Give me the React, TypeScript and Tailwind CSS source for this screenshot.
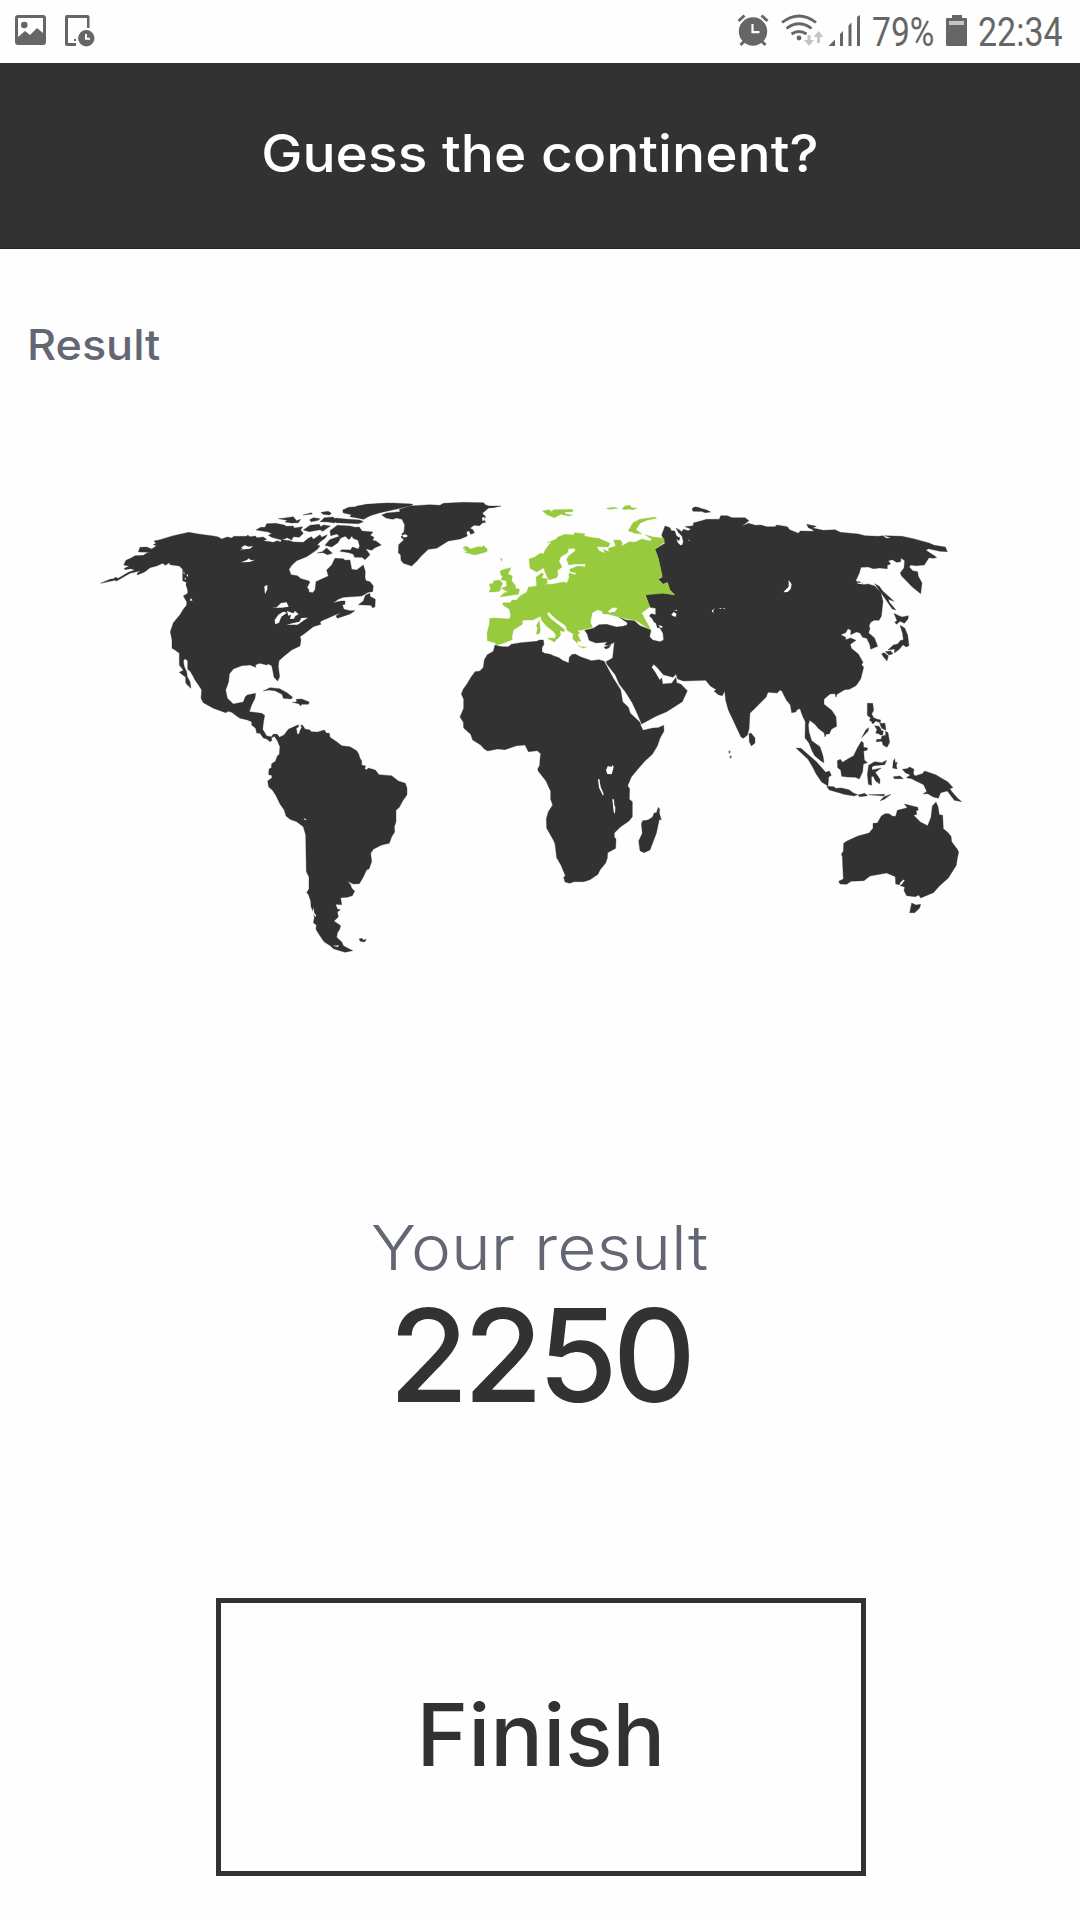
const DARK = "#323232";
const GREEN = "#97ca3d";

type Region = { origin: string; fill: string; shapes: string[]; lakes?: string[] };

const regions: Region[] = [
  {
    // North America
    origin: "translate(90 490) scale(.33333)",
    fill: DARK,
    shapes: [
      "M32 280L60 268L72 266L75 262L85 265L115 247L135 240L122 236L105 239L103 235L118 229L101 225L108 211L125 203L135 197L160 196L172 188L183 187L145 186L150 172L170 171L185 177L200 167L190 164L198 160L192 153L210 149L250 137L296 127L325 132L370 138L385 141L395 147L412 141L425 144L432 139L470 139L473 135L480 140L497 138L500 143L520 141L530 148L520 152L550 157L562 152L572 156L575 149L600 152L610 156L640 157L655 145L665 140L670 148L690 134L695 142L712 134L706 144L690 156L682 165L690 168L682 178L670 187L650 200L620 212L606 225L597 238L603 254L622 257L633 266L655 272L660 276L651 293L656 297L657 306L668 308L675 300L678 275L700 265L715 258L710 240L725 225L735 205L760 206L765 211L780 210L785 238L800 240L820 225L826 245L825 262L828 272L840 275L850 288L848 305L835 307L815 318L760 322L745 328L730 338L753 333L765 333L765 343L757 345L762 358L780 362L795 362L780 372L765 377L742 385L738 378L752 368L735 375L710 386L700 390L690 396L693 403L670 410L645 430L630 440L633 450L630 468L605 480L580 500L567 512L565 530L569 560L563 573L552 562L549 545L545 527L535 522L530 525L510 520L497 524L497 532L480 525L455 527L430 537L418 552L416 575L407 600L412 625L430 642L460 636L466 620L472 615L497 610L495 625L485 645L478 665L515 670L524 676L520 700L518 718L530 738L545 740L548 734L556 733L568 742L575 760L568 768L562 747L553 739L544 744L546 751L540 755L530 747L520 744L510 730L500 729L497 715L485 705L485 695L470 689L450 685L440 678L425 667L415 664L407 668L370 655L340 638L333 625L335 600L326 586L315 570L309 558L300 543L293 538L293 512L285 506L280 513L283 530L290 545L292 560L300 575L303 595L290 583L287 577L287 562L268 547L280 541L268 525L268 490L255 480L246 475L246 450L241 425L250 398L255 392L270 374L280 358L290 345L290 335L280 318L293 310L293 300L288 285L289 277L278 272L278 238L268 228L240 224L238 218L226 226L218 220L200 228L180 233L165 245L142 255L142 249L152 242L120 250L80 273L75 271Z",
      "M498 120L512 112L525 112L530 101L556 100L580 104L590 109L610 108L612 114L638 110L632 120L640 130L628 142L610 140L605 150L592 143L575 150L545 142L535 136L545 131L535 126Z",
      "M565 86L585 84L610 80L615 86L620 92L632 88L625 98L605 99L585 96L592 91ZM639 75L664 68L667 72ZM659 89L670 83L690 86L685 91L663 95ZM693 67L715 64L724 70L719 75L699 73ZM640 120L660 106L688 103L692 110L700 105L721 108L698 124L690 119L658 125ZM703 83L730 81L740 92L734 99L714 96L690 95ZM736 84L765 87L810 90L820 95L805 101L738 98ZM758 60L776 52L800 50L828 43L899 39L900 56L876 66L857 67L820 88L785 74L760 69Z",
      "M720 122L742 106L780 108L795 112L808 111L816 123L849 126L841 136L852 142L848 151L858 153L874 165L855 173L845 181L827 176L840 194L825 209L816 202L794 202L790 193L777 188L750 184L755 179L782 180L787 171L805 177L809 168L804 151L789 145L786 138L777 149L766 139L752 144L744 158L725 171L705 166L719 149L748 139L741 132L722 137ZM682 189L697 185L710 174L727 190L712 194L700 188ZM826 316L840 310L840 319L856 328L855 350L848 354L843 346L805 344L820 333Z",
      "M520 603L540 593L569 596L592 609L608 622L603 627L580 625L576 613L555 602L536 600ZM607 637L620 636L619 628L635 627L658 636L655 643L635 643L632 648L626 641Z",
    ],
    lakes: [
      "M448 179L459 176L453 173L464 166L476 170L489 168L480 176ZM453 217L471 210L476 205L483 211L495 209L480 216ZM523 289L532 285L532 298L525 313ZM546 353L560 352L573 339L590 337L596 350L575 353ZM556 403L554 390L565 374L580 365L591 368L574 380L567 398ZM591 363L610 370L615 363L626 373L616 378L612 386L600 387L603 374L595 377ZM590 404L610 399L628 395L634 384L654 383L642 391L623 404ZM300 333L302 324L308 331ZM280 244l4 5l-2 5ZM290 252l5 3l-4 7ZM284 263l4 2l-3 6Z",
    ],
  },
  {
    // Greenland
    origin: "translate(320 490) scale(.33333)",
    fill: DARK,
    shapes: [
      "M110 48L150 43L220 39L275 42L279 45L240 55L180 68L150 77L130 87L90 80Z",
      "M185 75L200 69L240 65L238 58L270 48L330 44L360 46L370 40L430 37L491 38L496 44L507 48L543 48L520 53L506 54L487 70L497 80L492 89L497 97L487 99L479 107L462 106L450 115L459 119L463 129L452 133L447 122L439 126L442 138L421 147L385 153L350 175L325 178L303 199L291 213L275 228L250 220L243 211L242 195L235 188L236 164L252 149L245 144L243 139L249 138L245 132L252 126L254 104L246 88L230 84L218 88L198 84Z",
    ],
    lakes: ["M248 135L256 133L264 138L258 142L249 142ZM486 84L493 80L494 89L488 94Z"],
  },
  {
    // South America
    origin: "translate(250 720) scale(.33333)",
    fill: DARK,
    shapes: [
      "M70 43L82 43L88 52L102 45L115 28L145 14L146 20L139 25L142 43L147 42L150 32L155 22L152 15L158 16L165 27L180 30L183 35L203 36L223 30L229 39L238 40L240 52L260 65L275 77L300 80L320 92L326 102L330 115L335 122L335 135L347 138L344 146L350 149L355 144L376 150L387 164L425 167L445 183L466 190L471 204L471 224L458 243L448 262L438 271L438 305L433 320L434 336L425 350L418 370L395 375L370 388L362 400L365 425L357 447L350 449L338 475L328 491L310 492L293 484L302 495L305 505L314 513L307 527L292 532L272 533L275 554L257 553L262 567L271 569L262 576L265 591L252 603L272 617L269 628L262 639L260 652L276 667L280 677L308 692L285 697L250 686L242 678L222 665L205 640L198 628L199 615L190 608L193 594L190 576L183 560L182 543L175 523L170 518L177 506L177 471L169 455L167 345L160 320L140 305L120 298L108 288L103 271L90 252L78 227L67 210L56 201L53 183L66 173L65 166L56 164L57 147L64 143L65 131L76 124L82 108L88 103L90 75Z",
      "M327 657L336 655L340 660L349 658L344 666L331 664Z",
    ],
    lakes: ["M161 294L170 299L165 301ZM190 561L193 580L198 585L196 592L188 579ZM249 675L258 677L266 675L264 681L254 679Z"],
  },
  {
    // Africa
    origin: "translate(440 620) scale(.33333)",
    fill: DARK,
    shapes: [
      "M165 75L175 78L188 80L205 80L214 73L242 68L290 64L298 60L310 60L312 73L306 83L306 95L314 100L331 103L342 108L357 113L367 121L386 129L388 112L395 104L405 102L421 110L438 116L454 122L477 119L493 124L498 134L520 175L542 209L548 245L565 262L571 280L600 307L603 318L609 331L639 324L655 323L671 316L672 333L660 355L652 378L637 403L614 424L597 443L574 471L563 497L569 506L568 538L577 545L577 590L567 603L542 620L523 639L523 651L528 657L527 685L503 698L502 714L497 729L480 750L474 763L450 779L431 785L402 785L389 790L375 786L371 772L376 767L363 736L350 713L345 671L340 660L320 625L319 596L325 575L338 555L332 538L332 514L318 483L308 470L295 454L293 447L299 436L300 418L302 401L292 392L265 395L255 375L230 377L216 382L195 389L173 387L143 393L133 387L122 375L98 360L92 343L71 324L70 307L60 291L71 265L71 238L64 222L70 207L81 192L93 172L105 155L120 153L130 142L133 119L142 104L160 94Z",
      "M655 562L659 568L658 579L664 600L658 598L649 640L630 690L612 698L600 692L596 663L607 640L604 611L608 602L624 600L637 592L643 578L649 579Z",
    ],
    lakes: [
      "M503 439L515 440L517 435L521 440L519 449L515 463L502 462L498 451ZM474 478L478 477L482 500L491 522L489 527L477 503ZM517 538L522 538L523 554L526 562L525 582L521 575Z",
    ],
  },
  {
    // Asia
    origin: "translate(640 490) scale(.33333)",
    fill: DARK,
    shapes: [
      "M17 315L40 309L73 310L103 315L90 300L83 278L70 283L55 268L67 262L55 205L45 178L75 160L65 135L75 108L90 113L94 122L104 123L110 139L120 143L117 152L109 146L113 158L121 166L127 165L130 155L126 139L115 127L108 114L122 122L124 127L130 118L145 122L153 117L135 110L160 107L160 99L200 88L238 88L242 77L262 77L276 83L315 83L327 92L305 109L325 100L347 106L362 105L380 110L405 110L410 105L442 110L449 119L475 130L481 123L520 124L520 120L505 113L500 103L529 109L518 114L550 121L585 119L601 127L655 132L675 137L715 139L729 137L739 145L754 144L734 137L786 139L820 146L867 159L883 166L916 171L922 185L900 184L865 176L858 181L890 202L881 205L867 203L853 225L828 227L812 225L808 231L818 242L833 245L835 259L846 279L842 311L817 291L784 257L781 248L792 234L794 212L783 204L782 215L770 217L757 209L745 212L752 222L742 226L742 236L719 234L700 236L685 231L663 232L658 249L647 273L665 277L669 284L684 282L704 288L722 306L729 334L724 379L717 391L702 391L692 397L687 408L690 414L686 429L703 443L713 469L692 478L689 463L680 445L668 442L660 429L649 426L632 434L633 421L624 416L617 428L602 434L617 442L617 449L632 444L648 451L631 463L634 475L655 492L669 517L665 524L671 532L662 567L648 587L628 598L614 599L599 608L591 613L588 622L585 611L570 612L552 628L552 643L575 661L588 680L590 709L574 718L568 732L559 732L555 741L552 728L536 716L524 702L509 691L505 704L507 726L515 752L540 770L549 798L552 818L542 812L524 797L516 782L507 759L495 744L496 695L488 679L480 656L473 658L467 666L455 668L451 645L439 630L425 602L419 601L412 609L384 607L378 622L330 670L327 718L322 736L310 745L303 741L265 660L257 631L254 603L247 617L235 614L222 603L229 599L211 588L197 571L130 573L113 567L108 553L99 562L70 554L51 532L41 523L35 532L45 546L59 570L65 564L68 582L95 580L108 562L110 578L123 583L142 602L127 635L80 665L48 679L5 702L-10 667L-23 639L-43 607L-62 583L-74 555L-98 524L-102 515L-82 504L-77 457L-95 467L-106 464L-98 456L-132 459L-153 451L-158 433L-166 421L-140 415L-123 404L-100 403L-71 411L-51 409L-39 405L-38 398L-63 381L-42 390L-17 392L0 407L33 420L29 440L38 450L60 455L71 450L69 430L59 413L52 413L48 400L42 396L37 386L28 378L34 371L47 374L47 355L30 352Z",
      "M156 57L166 51L187 56L200 60L212 66L196 68L184 64L159 64ZM704 281L718 289L728 303L762 334L745 328L748 337L768 360L757 357ZM762 370L776 377L787 381L805 377L804 387L793 400L780 394L770 403L764 397L771 392ZM780 406L794 414L803 435L807 467L798 471L789 464L778 478L763 489L764 477L744 480L760 465L773 462L782 451L790 450L788 431ZM736 485L752 483L759 491L747 495ZM725 491L732 488L745 497L741 513L730 500ZM327 731L333 729L345 744L345 759L334 768L328 755Z",
    ],
    lakes: [
      "M430 307L439 297L446 290L446 270L455 283L452 297L443 306ZM94 374L101 366L109 371L108 380L100 379ZM102 362l8 -3l2 3ZM215 362L225 354L220 361L220 370ZM236 357l8 -3v3ZM248 356l7 -1v3ZM650 275L656 279L666 276L667 283L654 281ZM56 405L67 409L67 414L59 412ZM114 109L136 115L129 118ZM145 149l5 1l-3 3Z",
    ],
  },
  {
    // Europe
    origin: "translate(450 490) scale(.33333)",
    fill: GREEN,
    shapes: [
      "M140 465L134 458L112 452L111 430L118 402L119 385L137 384L178 387L182 377L178 358L158 344L159 338L181 338L186 330L200 330L211 317L230 307L235 292L260 288L258 262L275 249L281 253L275 263L288 267L293 279L285 283L306 283L340 276L351 279L357 265L357 249L375 254L379 249L361 245L359 238L383 228L405 230L407 222L376 222L356 225L350 208L355 199L376 182L374 175L355 176L354 187L332 201L327 214L336 231L322 242L324 257L318 264L296 270L284 244L282 233L260 246L240 235L237 207L253 202L271 190L281 191L285 180L304 155L291 158L318 148L323 141L345 133L370 135L374 128L405 131L402 138L430 143L446 145L480 160L475 171L440 170L448 183L465 190L460 178L477 185L475 175L497 168L491 150L511 150L517 159L515 168L538 155L554 157L575 147L599 153L606 148L585 134L610 141L642 145L643 157L615 178L625 205L637 258L625 268L638 283L652 277L660 300L675 315L640 310L585 315L600 350L575 369L603 420L580 406L557 391L531 387L510 382L495 378L473 372L460 372L455 363L443 359L427 368L421 397L428 412L407 417L393 421L382 421L389 430L383 434L393 455L381 452L383 461L368 446L370 432L351 421L347 407L318 387L296 366L291 371L300 384L319 400L343 418L343 425L330 422L332 435L323 447L315 445L318 435L311 425L289 408L276 392L271 379L249 390L230 390L217 391L217 403L190 420L186 440L187 449L160 460Z",
      "M150 244L158 239L183 233L174 252L187 258L185 273L196 286L197 295L209 298L205 313L150 321L162 309L174 306L154 295L170 289L169 272L153 270L158 258L153 256ZM117 306L122 297L118 282L130 280L131 273L148 270L158 280L153 290L150 303L133 306ZM40 181L50 178L38 174L48 168L62 177L82 170L98 171L99 166L112 177L111 185L75 195L44 187L55 184ZM151 205l6 3l-2 6ZM295 444L321 445L314 456L295 447ZM259 407L268 391L269 405L271 421L268 431L259 433L263 414ZM288 263L292 271L282 270ZM384 467L393 470L410 471L399 474Z",
      "M277 62L298 59L303 65L311 59L368 58L368 65L344 66L347 72L367 75L355 78L333 73L313 83L291 74ZM469 55L492 52L504 55L480 58ZM516 56L525 48L540 46L545 53L561 54L550 59L535 57L524 59ZM535 122L549 98L569 88L603 83L614 81L620 85L593 90L571 99L558 119L576 132L554 130Z",
    ],
    lakes: ["M474 364L488 353L502 353L495 365L478 368Z"],
  },
  {
    // Cyprus and Severnaya Zemlya
    origin: "translate(450 490) scale(.33333)",
    fill: DARK,
    shapes: ["M462 471L474 468L483 466L476 474L467 477Z", "M728 55L735 51L750 54L750 64L732 61Z"],
  },
  {
    // South-East Asia and Oceania
    origin: "translate(780 680) scale(.33333)",
    fill: DARK,
    shapes: [
      "M176 604L190 597L187 530L184 523L190 514L191 490L201 483L234 468L267 459L279 445L279 430L292 429L304 408L315 401L327 401L338 409L347 409L352 391L382 383L373 372L394 377L413 382L415 390L408 393L411 403L401 406L421 426L443 437L453 412L457 378L468 366L474 380L478 404L488 406L490 446L503 457L513 469L515 485L532 508L536 517L532 535L529 556L505 594L479 617L460 638L422 654L416 645L406 650L380 647L372 632L374 621L361 617L371 598L358 614L347 612L346 590L320 579L270 588L252 602L213 604L200 613L180 612ZM395 669L408 675L422 673L419 684L404 698L389 698Z",
      "M367 268L381 266L389 261L402 268L400 280L405 288L427 281L434 273L467 284L504 306L519 323L509 326L519 339L533 355L545 365L523 361L502 333L482 338L475 355L460 351L443 341L430 342L440 334L431 314L408 303L395 296L379 293L391 285L376 278ZM172 242L181 238L188 247L202 238L221 227L231 206L244 184L250 188L251 202L263 204L261 211L251 213L253 240L262 248L250 252L248 275L238 297L226 292L201 291L185 289L182 270L173 263ZM48 204L63 205L110 246L137 277L148 273L154 286L146 291L144 318L125 306L108 281L98 261L84 238Z",
      "M140 319L162 320L167 325L184 324L207 329L219 338L233 344L222 348L192 343L177 338L148 330ZM234 345L254 340L263 347L239 350ZM266 344L314 343L311 348ZM300 362L312 350L333 343L313 358ZM266 256L284 245L305 248L320 241L314 254L283 257L276 260L276 270L304 264L286 277L300 298L299 312L286 302L280 289L274 290L275 316L265 313L263 290L262 284ZM340 243L344 236L346 248L352 247L349 256L351 267L338 264ZM340 290L360 288L370 296L343 296Z",
      "M262 70L278 70L281 91L275 102L281 113L292 118L302 120L301 128L287 123L279 132L268 120L272 114L262 106ZM245 173L258 149L266 143L264 154ZM299 130L315 130L318 151L305 145ZM284 137L297 139L303 148L300 163L287 159L291 149ZM302 151L310 153L308 165L300 165ZM288 185L291 178L303 178L306 168L317 166L317 154L324 158L329 187L321 202L309 195L306 184Z",
    ],
    lakes: ["M359 610L370 599L374 600L365 614ZM271 123l5 2l-3 3Z"],
  },
  {
    // Maldives
    origin: "translate(720 740)",
    fill: "#777777",
    shapes: ["M9 11h1v2h-1ZM10 16h1v2h-1Z"],
  },
];

function WorldMap() {
  return (
    <svg viewBox="90 490 890 470" className="ml-[90px] block h-[470px] w-[890px] overflow-visible" role="img" aria-label="World map, Europe highlighted">
      {regions.map((r, i) => (
        <g key={i} transform={r.origin} fill={r.fill}>
          {r.shapes.map((d, j) => (
            <path key={j} d={d} stroke={r.fill} strokeWidth="1" />
          ))}
          {r.lakes?.map((d, j) => (
            <path key={j} d={d} fill="#fefefe" />
          ))}
        </g>
      ))}
    </svg>
  );
}

function StatusBar() {
  return (
    <div className="flex h-[63px] items-start justify-between bg-[#fefefe]">
      <svg viewBox="0 0 100 63" className="h-[63px] w-[100px]" fill="#666666">
        <path fillRule="evenodd" d="M18 15H43Q46 15 46 18V42Q46 45 43 45H18Q15 45 15 42V18Q15 15 18 15ZM18 18V37L25 31L30 35L37 28L43 33V18Z" />
        <circle cx="24.3" cy="25" r="3.3" />
        <path d="M65 17Q65 15 67 15H87.500Q89.500 15 89.500 17V28H87V18H68V43H76V46H67Q65 46 65 44Z" />
        <path d="M74 39h2v2h-2z" />
        <circle cx="86.300" cy="38.300" r="8.200" />
        <path d="M86 34V38.700H90" fill="none" stroke="#fefefe" strokeWidth="2" />
      </svg>
      <div className="flex h-[63px]">
        <svg viewBox="730 0 140 63" className="h-[63px] w-[140px]" fill="#666666">
          <circle cx="753" cy="31.500" r="14.200" />
          <path d="M738.500 21L744.500 15.500M767.500 21L761.500 15.500M744.500 41L740.500 45M761.500 41L765.500 45" stroke="#666666" strokeWidth="3" />
          <path d="M752.500 24V32.200H759.500" fill="none" stroke="#fefefe" strokeWidth="2.200" />
          <path d="M782 22.500Q799 9.500 816 22.500M786.500 28.500Q799 19 811.500 28.500M791.500 34Q799 29 806.500 34" fill="none" stroke="#666666" strokeWidth="2.800" />
          <circle cx="799" cy="38" r="2.400" />
          <path d="M807.500 35H810.500V40H814L809 46L804 40H807.500ZM817 43V37H813.500L818.500 31L823.500 37H820V43Z" fill="#c4c4c4" />
          <path d="M828.500 46L835 39.500V46ZM840 34L843 31V46H840ZM848.500 25.500L851.500 22.500V46H848.500ZM857 17L860 15V46H857Z" />
        </svg>
        <span className="ml-[2px] w-[62px] origin-left scale-x-[.84] whitespace-nowrap font-['Roboto'] text-[40px] leading-[65px] text-[#666666]">79%</span>
        <svg viewBox="0 0 22 63" className="ml-[12px] h-[63px] w-[22px]" fill="#666666">
          <path d="M6 15H16V18H20Q21 18 21 19V45Q21 46 20 46H1Q0 46 0 45V19Q0 18 1 18H6Z" />
          <path d="M3 21H18V25H3Z" fill="#c4c4c4" />
        </svg>
        <span className="ml-[10px] w-[102px] origin-left scale-x-[.85] whitespace-nowrap font-['Roboto'] text-[40px] leading-[65px] text-[#666666]">22:34</span>
      </div>
    </div>
  );
}

export default function App() {
  return (
    <div className="flex h-[1920px] w-[1080px] flex-col overflow-hidden bg-[#fefefe] font-['Inter',sans-serif] text-[#323232]">
      <StatusBar />
      <header className="flex h-[186px] items-center justify-center border-b border-[#292429] bg-[#323232]">
        <h1 className="-mt-[3px] scale-x-[1.06] whitespace-nowrap text-[52px] font-medium leading-[62px] text-white">Guess the continent?</h1>
      </header>
      <main className="flex flex-1 flex-col">
        <h2 className="ml-[27px] mt-[71px] h-[50px] w-[200px] origin-left scale-x-[1.07] text-[42px] font-medium leading-[50px] text-[#636774]">Result</h2>
        <div className="mt-[120px]">
          <WorldMap />
        </div>
        <section className="mt-[248px] flex flex-col items-center">
          <p className="h-[80px] scale-x-[1.09] whitespace-nowrap text-[62px] font-light leading-[80px] text-[#636774]">Your result</p>
          <p className="mt-[2px] h-[130px] whitespace-nowrap pr-0 text-[129px] font-medium leading-[130px] tracking-[-5px]">2250</p>
        </section>
        <button className="ml-[216px] mt-[178px] flex h-[278px] w-[650px] items-center justify-center border-[5px] border-[#323232] pb-[4px] text-[86px] font-medium">
          <span className="scale-x-[1.02]">Finish</span>
        </button>
      </main>
    </div>
  );
}
